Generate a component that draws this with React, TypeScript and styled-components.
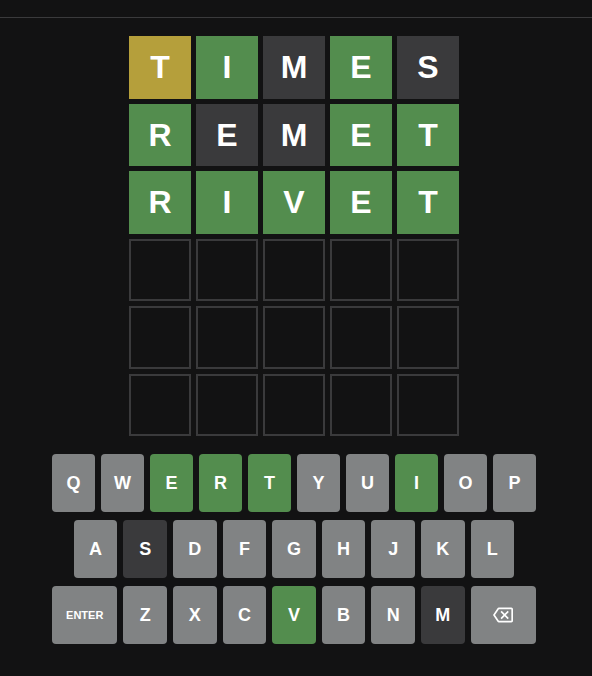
import React from "react";
import styled, { createGlobalStyle } from "styled-components";

const GlobalStyle = createGlobalStyle`
  html, body {
    margin: 0;
    padding: 0;
    background: #121213;
    font-family: "Liberation Sans", Arial, sans-serif;
  }
`;

type State = "correct" | "present" | "absent" | "empty";

const colors: Record<State, string> = {
  correct: "#538d4e",
  present: "#b59f3b",
  absent: "#3a3a3c",
  empty: "transparent",
};

const Page = styled.div`
  width: 588px;
  min-height: 676px;
  display: flex;
  flex-direction: column;
`;

const Header = styled.header`
  height: 17px;
  width: 592px;
  border-bottom: 1px solid #3a3a3c;
`;

const Board = styled.div`
  margin: 18px auto 0;
  width: 330px;
  height: 400px;
  display: grid;
  grid-template-rows: repeat(6, 1fr);
  gap: 5px;
`;

const Row = styled.div`
  display: grid;
  grid-template-columns: repeat(5, 1fr);
  gap: 5px;
`;

const Tile = styled.div<{ $state: State }>`
  box-sizing: border-box;
  display: flex;
  align-items: center;
  justify-content: center;
  background: ${(p) => colors[p.$state]};
  border: ${(p) => (p.$state === "empty" ? "2px solid #3a3a3c" : "none")};
  color: #ffffff;
  font-size: 32px;
  font-weight: 700;
  line-height: 1;
`;

const Keyboard = styled.div`
  width: 484px;
  margin: 18px auto 0;
  display: flex;
  flex-direction: column;
  gap: 8px;
`;

const KeyRow = styled.div`
  display: flex;
  gap: 6px;
`;

const Spacer = styled.div`
  flex: 0.5;
  margin-right: -6px;
  &:last-child {
    margin-right: 0;
    margin-left: -6px;
  }
`;

const Key = styled.button<{ $state?: State; $wide?: boolean; $small?: boolean }>`
  flex: ${(p) => (p.$wide ? 1.5 : 1)};
  min-width: 0;
  height: 58px;
  border: 0;
  padding: 0;
  border-radius: 4px;
  background: ${(p) => (p.$state && p.$state !== "empty" ? colors[p.$state] : "#818384")};
  color: #ffffff;
  font-family: "Liberation Sans", Arial, sans-serif;
  font-weight: 700;
  font-size: ${(p) => (p.$small ? "11px" : "18px")};
  display: flex;
  align-items: center;
  justify-content: center;
`;

const guesses: { word: string; states: State[] }[] = [
  { word: "TIMES", states: ["present", "correct", "absent", "correct", "absent"] },
  { word: "REMET", states: ["correct", "absent", "absent", "correct", "correct"] },
  { word: "RIVET", states: ["correct", "correct", "correct", "correct", "correct"] },
];

const keyStates: Record<string, State> = {
  E: "correct",
  R: "correct",
  T: "correct",
  I: "correct",
  V: "correct",
  S: "absent",
  M: "absent",
};

const BackspaceIcon = () => (
  <svg width="20" height="20" viewBox="0 0 24 24" fill="#ffffff">
    <path d="M22 3H7c-.69 0-1.23.35-1.59.88L0 12l5.41 8.11c.36.53.9.89 1.59.89h15c1.1 0 2-.9 2-2V5c0-1.1-.9-2-2-2zm0 16H7.07L2.4 12l4.66-7H22v14zm-11.59-2L14 13.41 17.59 17 19 15.59 15.41 12 19 8.41 17.59 7 14 10.59 10.41 7 9 8.41 12.59 12 9 15.59z" />
  </svg>
);

const renderKey = (k: string) => (
  <Key key={k} $state={keyStates[k]}>
    {k}
  </Key>
);

export default function App() {
  const rows = Array.from({ length: 6 }, (_, i) => guesses[i]);
  return (
    <>
      <GlobalStyle />
      <Page>
        <Header />
        <Board>
          {rows.map((g, r) => (
            <Row key={r}>
              {Array.from({ length: 5 }, (_, c) => (
                <Tile key={c} $state={g ? g.states[c] : "empty"}>
                  {g ? g.word[c] : ""}
                </Tile>
              ))}
            </Row>
          ))}
        </Board>
        <Keyboard>
          <KeyRow>{"QWERTYUIOP".split("").map(renderKey)}</KeyRow>
          <KeyRow>
            <Spacer />
            {"ASDFGHJKL".split("").map(renderKey)}
            <Spacer />
          </KeyRow>
          <KeyRow>
            <Key $wide $small>ENTER</Key>
            {"ZXCVBNM".split("").map(renderKey)}
            <Key $wide aria-label="backspace">
              <BackspaceIcon />
            </Key>
          </KeyRow>
        </Keyboard>
      </Page>
    </>
  );
}
